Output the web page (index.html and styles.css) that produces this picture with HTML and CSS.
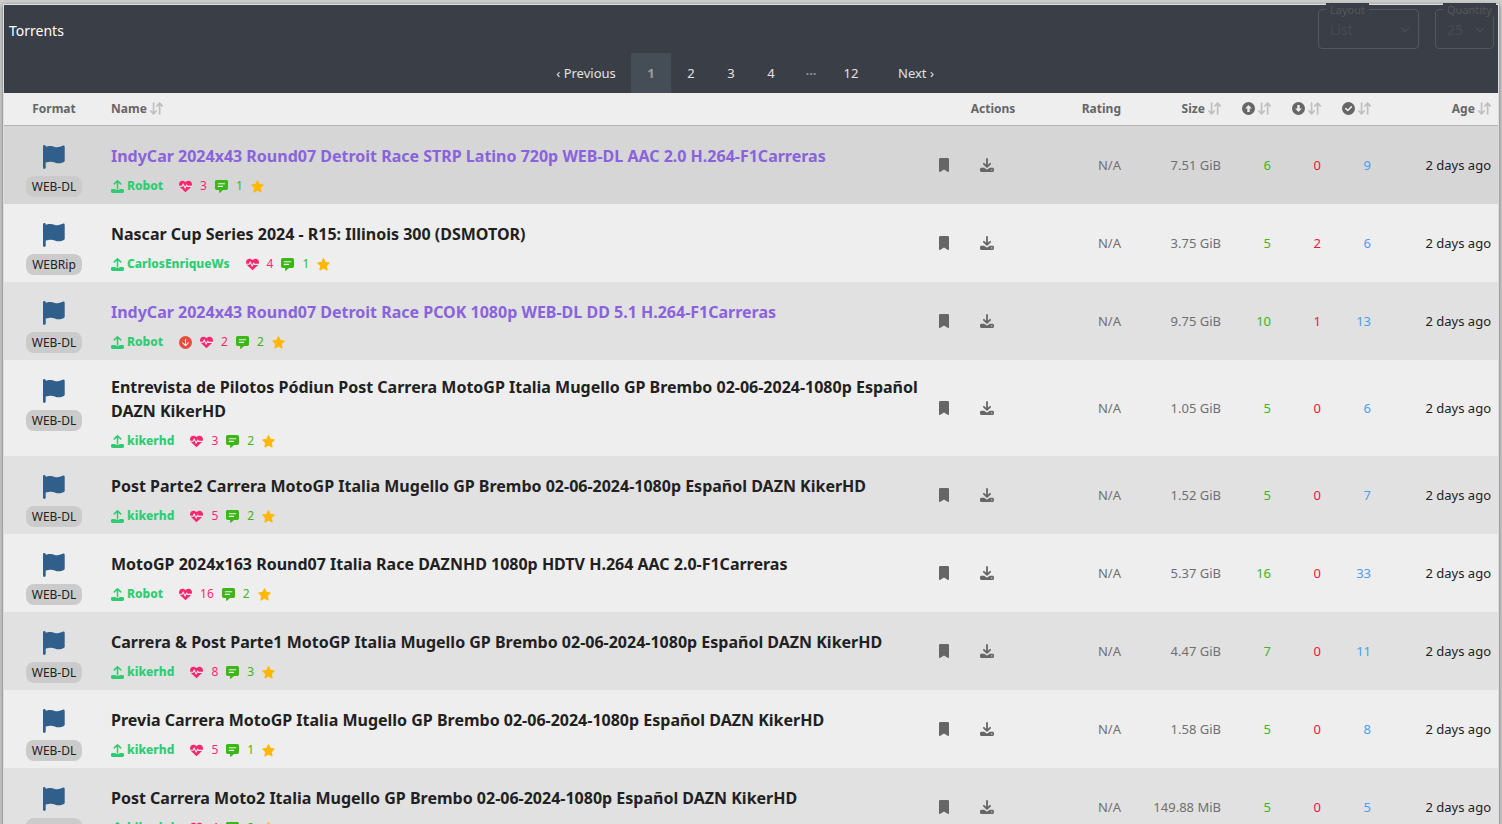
FILE: index.html
```html
<!DOCTYPE html>
<html lang="en">
<head>
<meta charset="utf-8">
<title>Torrents</title>
<meta name="viewport" content="width=device-width,initial-scale=1">
<link rel="stylesheet" href="styles.css">
</head>
<body>

<!-- ====================== ICONS ====================== -->
<svg class="sprite" aria-hidden="true">
  <symbol id="i-flag" viewBox="0 0 22 24"><path d="M1.3 0C2.1 0 2.7.6 2.7 1.3v.5l3-.7c1.900-.4 3.800-.2 5.500.6 2 .9 4.300.8 6.300-.1l2.300-.9c.9-.4 1.900.2 1.900 1.200v13.900c0 .6-.4 1.100-.9 1.300l-1.700.6c-2.400.9-5 .9-7.300-.2-1.900-.8-4-1.100-6-.6l-3.100.7v5c0 .8-.6 1.400-1.400 1.400S0 23.400 0 22.600V1.300C0 .6.600 0 1.300 0z"/></symbol>
  <symbol id="i-upload" viewBox="0 0 12 12"><path d="M6 8V1M3 3.600L6 .8l3 2.800" fill="none" stroke="currentColor" stroke-width="1.400" stroke-linecap="round" stroke-linejoin="round"/><path d="M1.300 8.200h3V9h3.400v-.8h3c.7 0 1.300.6 1.300 1.300v1.200c0 .7-.6 1.300-1.300 1.300H1.300C.6 12 0 11.400 0 10.700V9.500c0-.7.6-1.300 1.300-1.300z"/></symbol>
  <symbol id="i-download" viewBox="0 0 14 14"><path d="M7 1v7.500M3.900 5.800L7 8.800l3.100-3" fill="none" stroke="currentColor" stroke-width="1.800" stroke-linecap="round" stroke-linejoin="round"/><path fill-rule="evenodd" d="M1.500 9.800h2.700l1.700 1.300c.6.500 1.600.5 2.200 0l1.700-1.300h2.700c.8 0 1.500.6 1.500 1.400v1.300c0 .8-.7 1.500-1.500 1.500h-11C.7 14 0 13.300 0 12.500v-1.300c0-.8.7-1.400 1.500-1.400zM11.800 11.200a.7.700 0 1 0 0 1.400.7.700 0 0 0 0-1.400z"/></symbol>
  <symbol id="i-bookmark" viewBox="0 0 10 14"><path d="M0 1.300C0 .6.600 0 1.300 0h7.400C9.400 0 10 .6 10 1.300v12c0 .5-.5.800-1 .600L5 11.400 1 13.900c-.5.200-1-.1-1-.600z"/></symbol>
  <symbol id="i-heart" viewBox="0 0 12 12"><path d="M6 11.400L1.100 6.700C.3 5.900 0 5 0 4 0 2.100 1.400.7 3.100.7 4.200.7 5.300 1.200 6 2.100 6.700 1.200 7.800.7 8.900.7 10.600.7 12 2.100 12 4c0 1-.3 1.900-1.100 2.700z"/><path class="cut" d="M.5 5.700h2.400l1-2 1.700 3.800 1.500-2.800.7 1.200h3.700"/></symbol>
  <symbol id="i-comment" viewBox="0 0 12 12"><path d="M1.500 0h9c.8 0 1.500.7 1.500 1.500v6.200c0 .8-.7 1.500-1.500 1.500H7.400l-2.900 2.600c-.3.300-.7.100-.7-.3V9.200H1.500C.7 9.200 0 8.500 0 7.700V1.500C0 .7.700 0 1.500 0z"/><path class="cut" d="M3 3.500h6M3 5.900h4"/></symbol>
  <symbol id="i-star" viewBox="0 0 12 12"><path stroke="currentColor" stroke-linejoin="round" d="M6 .7l1.600 3.300 3.700.6-2.700 2.600.7 3.800L6 9.200l-3.300 1.800.7-3.800L.7 4.600l3.700-.6z"/></symbol>
  <symbol id="i-circle-down" viewBox="0 0 12 12"><circle cx="6" cy="6" r="6"/><path class="cut" d="M6 3v5.800M3.400 6.300L6 8.900l2.600-2.600"/></symbol>
  <symbol id="i-head-down" viewBox="0 0 12 12"><circle cx="6" cy="6" r="6"/><path class="hole" d="M4.900 2.800h2.200v3.100h2L6 9.200 2.900 5.900h2z"/></symbol>
  <symbol id="i-head-up" viewBox="0 0 12 12"><circle cx="6" cy="6" r="6"/><path class="hole" d="M4.900 9.200h2.200V6.100h2L6 2.800 2.900 6.100h2z"/></symbol>
  <symbol id="i-head-check" viewBox="0 0 12 12"><circle cx="6" cy="6" r="6"/><path class="hole-line" d="M3.500 6.100l1.800 1.800 3.300-3.400"/></symbol>
  <symbol id="i-sort" viewBox="0 0 12 12"><path d="M3.300 1v9.800M.9 8.300l2.400 2.600 2.400-2.600M8.900 11V1M6.500 3.600L8.900 1l2.400 2.600" fill="none" stroke="currentColor" stroke-width="1.600" stroke-linecap="round" stroke-linejoin="round"/></symbol>
</svg>

<section class="panel">
  <!-- ====================== HEADER ====================== -->
  <header class="panel-header">
    <h2 class="panel-title">Torrents</h2>
    <div class="controls">
      <div class="field field-layout">
        <select id="layout"><option>List</option><option>Cards</option><option>Grouped</option></select>
        <label for="layout">Layout</label>
      </div>
      <div class="field field-quantity">
        <select id="quantity"><option>25</option><option>50</option><option>100</option></select>
        <label for="quantity">Quantity</label>
      </div>
    </div>
  </header>
  <nav class="pagination" aria-label="Pagination">
    <a class="step" href="#">‹ Previous</a>
    <span class="current" aria-current="page">1</span>
    <a href="#">2</a>
    <a href="#">3</a>
    <a href="#">4</a>
    <span class="dots">···</span>
    <a href="#">12</a>
    <a class="step" href="#">Next ›</a>
  </nav>

  <!-- ====================== TABLE ====================== -->
  <table class="torrents">
    <colgroup>
      <col class="col-format"><col><col class="col-actions"><col class="col-rating"><col class="col-size">
      <col class="col-count"><col class="col-count"><col class="col-count"><col class="col-age">
    </colgroup>
    <thead>
      <tr>
        <th class="center">Format</th>
        <th class="left">Name <svg class="sort"><use href="#i-sort"/></svg></th>
        <th class="center">Actions</th>
        <th>Rating</th>
        <th>Size <svg class="sort"><use href="#i-sort"/></svg></th>
        <th aria-label="Seeders"><svg class="head-icon"><use href="#i-head-up"/></svg> <svg class="sort"><use href="#i-sort"/></svg></th>
        <th aria-label="Leechers"><svg class="head-icon"><use href="#i-head-down"/></svg> <svg class="sort"><use href="#i-sort"/></svg></th>
        <th aria-label="Completed"><svg class="head-icon"><use href="#i-head-check"/></svg> <svg class="sort"><use href="#i-sort"/></svg></th>
        <th>Age <svg class="sort"><use href="#i-sort"/></svg></th>
      </tr>
    </thead>
    <tbody>
      <tr class="active">
        <td class="format"><svg class="flag"><use href="#i-flag"/></svg><span class="badge">WEB-DL</span></td>
        <td class="name"><a class="title visited" href="#">IndyCar 2024x43 Round07 Detroit Race STRP Latino 720p WEB-DL AAC 2.0 H.264-F1Carreras</a>
          <div class="meta"><a class="user" href="#"><svg><use href="#i-upload"/></svg>Robot</a><span class="thanks"><svg><use href="#i-heart"/></svg>3</span><span class="comments"><svg><use href="#i-comment"/></svg>1</span><svg class="star"><use href="#i-star"/></svg></div></td>
        <td><div class="actions"><button aria-label="Bookmark"><svg class="bookmark"><use href="#i-bookmark"/></svg></button><button aria-label="Download"><svg class="download"><use href="#i-download"/></svg></button></div></td>
        <td>N/A</td><td>7.51 GiB</td><td class="seeders">6</td><td class="leechers">0</td><td class="completed">9</td><td class="age">2 days ago</td>
      </tr>
      <tr>
        <td class="format"><svg class="flag"><use href="#i-flag"/></svg><span class="badge">WEBRip</span></td>
        <td class="name"><a class="title" href="#">Nascar Cup Series 2024 - R15: Illinois 300 (DSMOTOR)</a>
          <div class="meta"><a class="user" href="#"><svg><use href="#i-upload"/></svg>CarlosEnriqueWs</a><span class="thanks"><svg><use href="#i-heart"/></svg>4</span><span class="comments"><svg><use href="#i-comment"/></svg>1</span><svg class="star"><use href="#i-star"/></svg></div></td>
        <td><div class="actions"><button aria-label="Bookmark"><svg class="bookmark"><use href="#i-bookmark"/></svg></button><button aria-label="Download"><svg class="download"><use href="#i-download"/></svg></button></div></td>
        <td>N/A</td><td>3.75 GiB</td><td class="seeders">5</td><td class="leechers">2</td><td class="completed">6</td><td class="age">2 days ago</td>
      </tr>
      <tr>
        <td class="format"><svg class="flag"><use href="#i-flag"/></svg><span class="badge">WEB-DL</span></td>
        <td class="name"><a class="title visited" href="#">IndyCar 2024x43 Round07 Detroit Race PCOK 1080p WEB-DL DD 5.1 H.264-F1Carreras</a>
          <div class="meta"><a class="user" href="#"><svg><use href="#i-upload"/></svg>Robot</a><svg class="leeching"><use href="#i-circle-down"/></svg><span class="thanks"><svg><use href="#i-heart"/></svg>2</span><span class="comments"><svg><use href="#i-comment"/></svg>2</span><svg class="star"><use href="#i-star"/></svg></div></td>
        <td><div class="actions"><button aria-label="Bookmark"><svg class="bookmark"><use href="#i-bookmark"/></svg></button><button aria-label="Download"><svg class="download"><use href="#i-download"/></svg></button></div></td>
        <td>N/A</td><td>9.75 GiB</td><td class="seeders">10</td><td class="leechers">1</td><td class="completed">13</td><td class="age">2 days ago</td>
      </tr>
      <tr>
        <td class="format"><svg class="flag"><use href="#i-flag"/></svg><span class="badge">WEB-DL</span></td>
        <td class="name"><a class="title" href="#">Entrevista de Pilotos Pódiun Post Carrera MotoGP Italia Mugello GP Brembo 02-06-2024-1080p Español DAZN KikerHD</a>
          <div class="meta"><a class="user" href="#"><svg><use href="#i-upload"/></svg>kikerhd</a><span class="thanks"><svg><use href="#i-heart"/></svg>3</span><span class="comments"><svg><use href="#i-comment"/></svg>2</span><svg class="star"><use href="#i-star"/></svg></div></td>
        <td><div class="actions"><button aria-label="Bookmark"><svg class="bookmark"><use href="#i-bookmark"/></svg></button><button aria-label="Download"><svg class="download"><use href="#i-download"/></svg></button></div></td>
        <td>N/A</td><td>1.05 GiB</td><td class="seeders">5</td><td class="leechers">0</td><td class="completed">6</td><td class="age">2 days ago</td>
      </tr>
      <tr>
        <td class="format"><svg class="flag"><use href="#i-flag"/></svg><span class="badge">WEB-DL</span></td>
        <td class="name"><a class="title" href="#">Post Parte2 Carrera MotoGP Italia Mugello GP Brembo 02-06-2024-1080p Español DAZN KikerHD</a>
          <div class="meta"><a class="user" href="#"><svg><use href="#i-upload"/></svg>kikerhd</a><span class="thanks"><svg><use href="#i-heart"/></svg>5</span><span class="comments"><svg><use href="#i-comment"/></svg>2</span><svg class="star"><use href="#i-star"/></svg></div></td>
        <td><div class="actions"><button aria-label="Bookmark"><svg class="bookmark"><use href="#i-bookmark"/></svg></button><button aria-label="Download"><svg class="download"><use href="#i-download"/></svg></button></div></td>
        <td>N/A</td><td>1.52 GiB</td><td class="seeders">5</td><td class="leechers">0</td><td class="completed">7</td><td class="age">2 days ago</td>
      </tr>
      <tr>
        <td class="format"><svg class="flag"><use href="#i-flag"/></svg><span class="badge">WEB-DL</span></td>
        <td class="name"><a class="title" href="#">MotoGP 2024x163 Round07 Italia Race DAZNHD 1080p HDTV H.264 AAC 2.0-F1Carreras</a>
          <div class="meta"><a class="user" href="#"><svg><use href="#i-upload"/></svg>Robot</a><span class="thanks"><svg><use href="#i-heart"/></svg>16</span><span class="comments"><svg><use href="#i-comment"/></svg>2</span><svg class="star"><use href="#i-star"/></svg></div></td>
        <td><div class="actions"><button aria-label="Bookmark"><svg class="bookmark"><use href="#i-bookmark"/></svg></button><button aria-label="Download"><svg class="download"><use href="#i-download"/></svg></button></div></td>
        <td>N/A</td><td>5.37 GiB</td><td class="seeders">16</td><td class="leechers">0</td><td class="completed">33</td><td class="age">2 days ago</td>
      </tr>
      <tr>
        <td class="format"><svg class="flag"><use href="#i-flag"/></svg><span class="badge">WEB-DL</span></td>
        <td class="name"><a class="title" href="#">Carrera &amp; Post Parte1 MotoGP Italia Mugello GP Brembo 02-06-2024-1080p Español DAZN KikerHD</a>
          <div class="meta"><a class="user" href="#"><svg><use href="#i-upload"/></svg>kikerhd</a><span class="thanks"><svg><use href="#i-heart"/></svg>8</span><span class="comments"><svg><use href="#i-comment"/></svg>3</span><svg class="star"><use href="#i-star"/></svg></div></td>
        <td><div class="actions"><button aria-label="Bookmark"><svg class="bookmark"><use href="#i-bookmark"/></svg></button><button aria-label="Download"><svg class="download"><use href="#i-download"/></svg></button></div></td>
        <td>N/A</td><td>4.47 GiB</td><td class="seeders">7</td><td class="leechers">0</td><td class="completed">11</td><td class="age">2 days ago</td>
      </tr>
      <tr>
        <td class="format"><svg class="flag"><use href="#i-flag"/></svg><span class="badge">WEB-DL</span></td>
        <td class="name"><a class="title" href="#">Previa Carrera MotoGP Italia Mugello GP Brembo 02-06-2024-1080p Español DAZN KikerHD</a>
          <div class="meta"><a class="user" href="#"><svg><use href="#i-upload"/></svg>kikerhd</a><span class="thanks"><svg><use href="#i-heart"/></svg>5</span><span class="comments"><svg><use href="#i-comment"/></svg>1</span><svg class="star"><use href="#i-star"/></svg></div></td>
        <td><div class="actions"><button aria-label="Bookmark"><svg class="bookmark"><use href="#i-bookmark"/></svg></button><button aria-label="Download"><svg class="download"><use href="#i-download"/></svg></button></div></td>
        <td>N/A</td><td>1.58 GiB</td><td class="seeders">5</td><td class="leechers">0</td><td class="completed">8</td><td class="age">2 days ago</td>
      </tr>
      <tr>
        <td class="format"><svg class="flag"><use href="#i-flag"/></svg><span class="badge">WEB-DL</span></td>
        <td class="name"><a class="title" href="#">Post Carrera Moto2 Italia Mugello GP Brembo 02-06-2024-1080p Español DAZN KikerHD</a>
          <div class="meta"><a class="user" href="#"><svg><use href="#i-upload"/></svg>kikerhd</a><span class="thanks"><svg><use href="#i-heart"/></svg>4</span><span class="comments"><svg><use href="#i-comment"/></svg>2</span><svg class="star"><use href="#i-star"/></svg></div></td>
        <td><div class="actions"><button aria-label="Bookmark"><svg class="bookmark"><use href="#i-bookmark"/></svg></button><button aria-label="Download"><svg class="download"><use href="#i-download"/></svg></button></div></td>
        <td>N/A</td><td>149.88 MiB</td><td class="seeders">5</td><td class="leechers">0</td><td class="completed">5</td><td class="age">2 days ago</td>
      </tr>
    </tbody>
  </table>
</section>

</body>
</html>
```

FILE: styles.css
```css
/* ---------- Base ---------- */
*{margin:0;padding:0;box-sizing:border-box}
body{background:#cdcdcd;color:#212121;font:14px/20px "Segoe UI","Noto Sans","Open Sans",sans-serif;padding:4px 3px}
a{color:inherit;text-decoration:none}
svg{fill:currentColor}
.sprite{display:none}
.cut,.hole,.hole-line{stroke-linejoin:round;stroke-linecap:round}
.cut{fill:none;stroke:#eee;stroke-width:1}
.hole{fill:#eee}
.hole-line{fill:none;stroke:#eee;stroke-width:1.4}
/* ---------- Panel ---------- */
.panel{border:1px solid #dedede;background:#eee;box-shadow:0 1px 4px rgba(0,0,0,.5)}
.panel-header{display:flex;justify-content:space-between;align-items:flex-start;height:48px;padding:4px 4px 4px 5px;background:#3a3e46;color:#fff}
.panel-title{font-size:14px;font-weight:400;line-height:20px;padding-top:12px}
.controls{display:flex;gap:16px}
/* ---------- Floating label selects ---------- */
.field{position:relative;color:#55575a}
.field-layout{width:101px}
.field-quantity{width:59px}
.field select{width:100%;height:40px;padding:0 11px;border:1px solid #555759;border-radius:4px;background:transparent;
  appearance:none;color:#484b4f;font:14px "Segoe UI","Noto Sans","Open Sans",sans-serif}
.field::after{content:"";position:absolute;right:11px;top:16px;width:5px;height:5px;border:solid #4e5154;border-width:0 1px 1px 0;transform:rotate(45deg);pointer-events:none}
.field label{position:absolute;left:8px;top:-6px;padding:0 4px;background:#3a3e46;font-size:11px;line-height:14px}
/* ---------- Pagination ---------- */
.pagination{display:flex;justify-content:center;background:#3a3e46;color:#e2e2e2;font-size:13px;line-height:40px;text-align:center}
.pagination>*{width:40px}
.pagination .step{width:90px}
.pagination .current{background:#454e56;color:#999c9f;font-weight:700}
.pagination .dots{color:#8d8f92;font-weight:700}
/* ---------- Table ---------- */
.torrents{width:100%;table-layout:fixed;border-collapse:separate;border-spacing:0}
.col-format{width:100px}
.col-actions{width:130px}
.col-rating{width:70px}
.col-size{width:100px}
.col-count{width:50px}
.col-age{width:120px}
th{height:33px;padding:0 7px;border-bottom:1px solid #b4b4b4;color:#666;font-size:12px;line-height:16px;text-align:right;white-space:nowrap}
th.center{text-align:center}
th.left{text-align:left}
.sort,.head-icon{width:13px;height:13px;vertical-align:-2px}
.sort{color:#c0c0c0}
td{height:78px;padding:0 7px;color:#707070;font-size:13px;text-align:right;vertical-align:middle}
tbody tr:nth-child(odd){background:#e1e1e1}
tbody tr.active{background:#d6d6d6}
.seeders{color:#3db618}
.leechers{color:#f5103c}
.completed{color:#4a9ff0}
.age{color:#212121}
/* ---------- Format ---------- */
.format{padding:19px 7px 7px;text-align:center;vertical-align:top}
.flag{display:block;width:22px;height:24px;margin:0 auto 7px;color:#315f8c}
.badge{display:inline-block;height:21px;padding:0 6px;border-radius:8px;background:#cbcbcb;color:#212121;font-size:12px;line-height:21px;vertical-align:top}
/* ---------- Name ---------- */
.name{padding:15px 0 6px 7px;text-align:left}
.title{display:block;color:#212121;font-size:16px;font-weight:700;line-height:24px}
.title.visited{color:#8a63dc}
.meta{display:flex;align-items:center;gap:8px;margin-top:9px;font-size:12px;line-height:18px}
.meta svg{width:13px;height:13px}
.meta a,.meta span{display:flex;align-items:center;gap:8px}
.meta .user{gap:3px;margin-right:8px;color:#2ecc71;font-weight:800}
.thanks{color:#fb2670}
.comments{color:#3db618}
.leeching{color:#e74c3c}
.star{color:#ffb800}
/* ---------- Actions ---------- */
.actions{display:flex;gap:25px}
.actions button{display:flex;justify-content:center;width:18px;border:0;background:none;color:#666;cursor:pointer}
.bookmark{width:10px;height:14px}
.download{width:14px;height:14px}
```
